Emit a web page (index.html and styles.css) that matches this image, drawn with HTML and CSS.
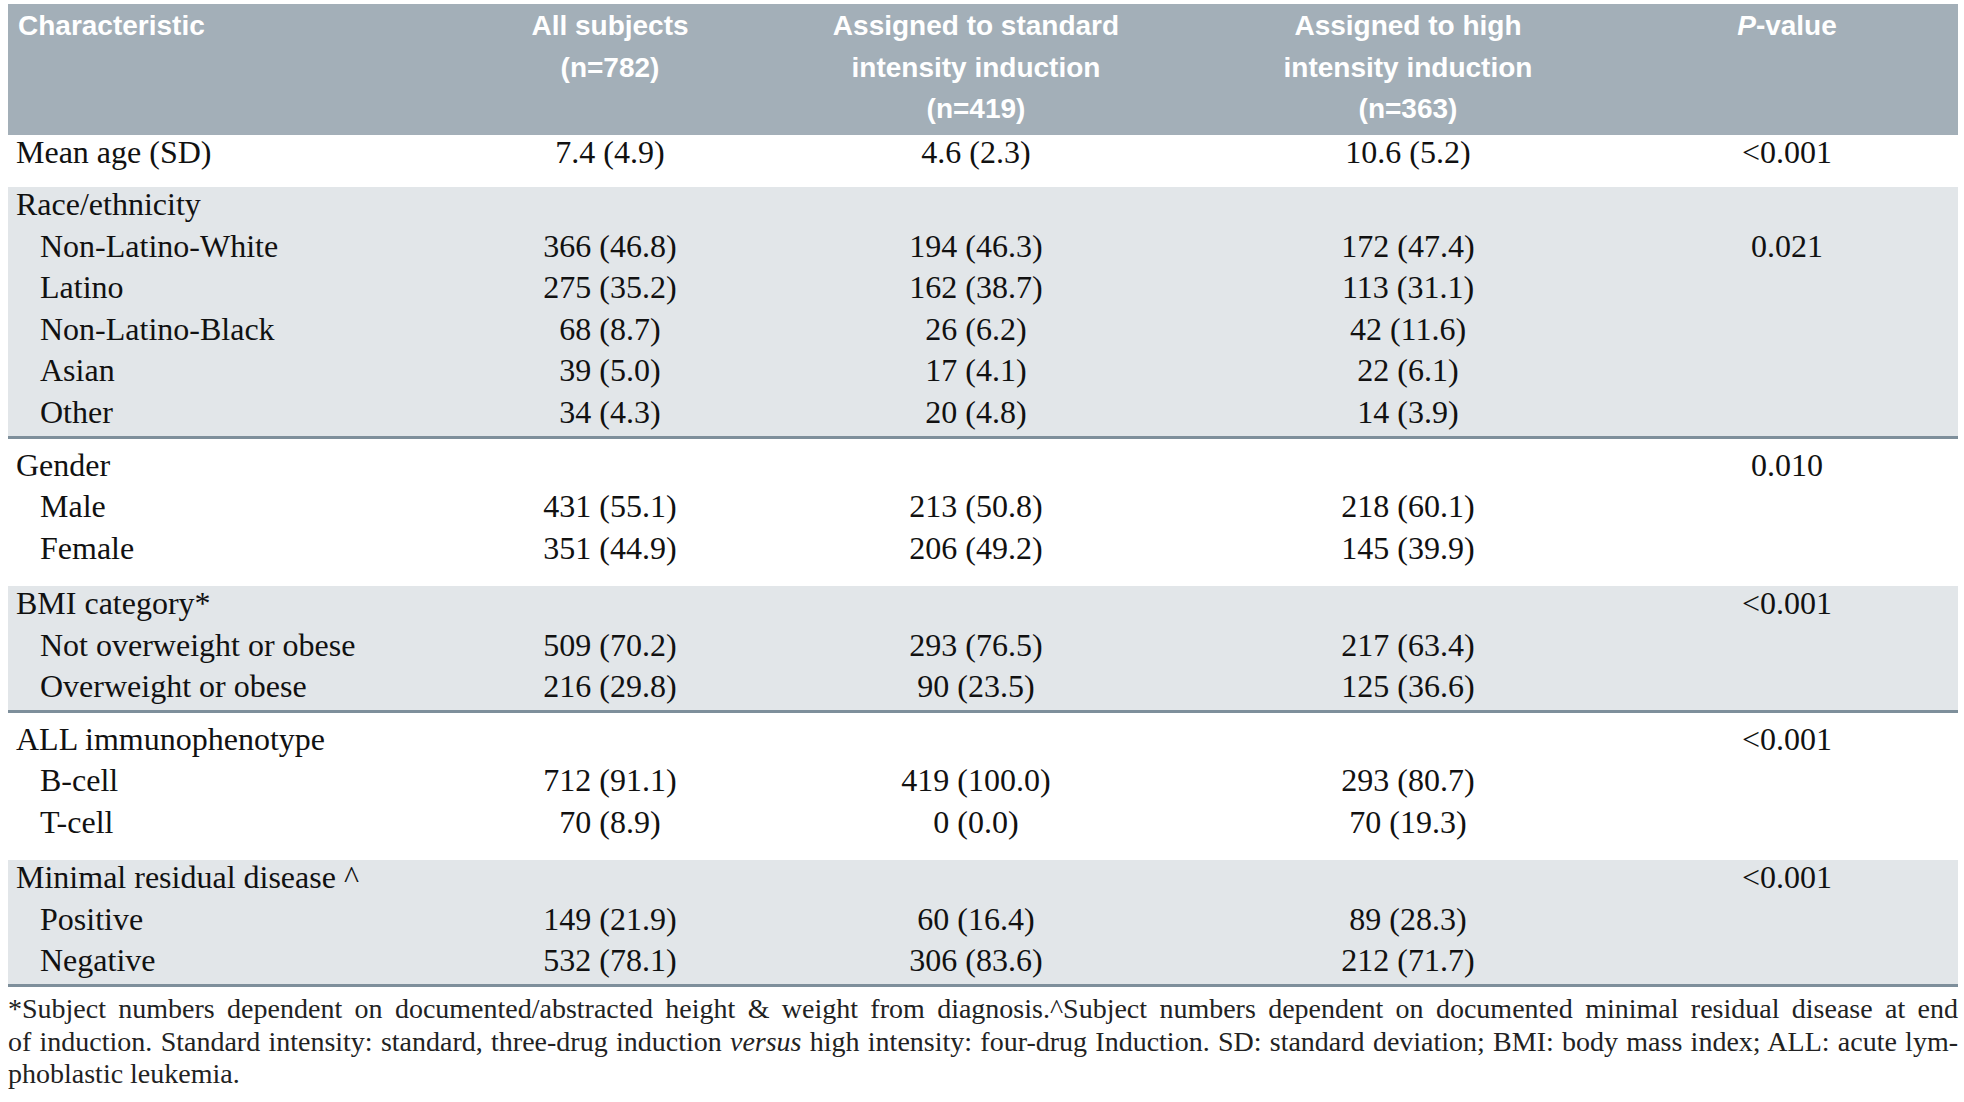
FILE: index.html
```html
<!DOCTYPE html>
<html lang="en">
<head>
<meta charset="utf-8">
<title>Table</title>
<link rel="stylesheet" href="styles.css">
</head>
<body>
<div class="page">
<table class="data">
  <colgroup>
    <col class="c1"><col class="c2"><col class="c3"><col class="c4"><col class="c5">
  </colgroup>
  <thead>
    <tr>
      <th class="left">Characteristic</th>
      <th>All subjects<br>(n=782)</th>
      <th>Assigned to standard<br>intensity induction<br>(n=419)</th>
      <th>Assigned to high<br>intensity induction<br>(n=363)</th>
      <th><i>P</i>-value</th>
    </tr>
  </thead>
  <tbody class="grp white top">
    <tr class="first last"><td class="lbl">Mean age (SD)</td><td>7.4 (4.9)</td><td>4.6 (2.3)</td><td>10.6 (5.2)</td><td>&lt;0.001</td></tr>
  </tbody>
  <tbody class="grp gray">
    <tr class="first"><td class="lbl">Race/ethnicity</td><td></td><td></td><td></td><td></td></tr>
    <tr><td class="sub">Non-Latino-White</td><td>366 (46.8)</td><td>194 (46.3)</td><td>172 (47.4)</td><td>0.021</td></tr>
    <tr><td class="sub">Latino</td><td>275 (35.2)</td><td>162 (38.7)</td><td>113 (31.1)</td><td></td></tr>
    <tr><td class="sub">Non-Latino-Black</td><td>68 (8.7)</td><td>26 (6.2)</td><td>42 (11.6)</td><td></td></tr>
    <tr><td class="sub">Asian</td><td>39 (5.0)</td><td>17 (4.1)</td><td>22 (6.1)</td><td></td></tr>
    <tr class="last"><td class="sub">Other</td><td>34 (4.3)</td><td>20 (4.8)</td><td>14 (3.9)</td><td></td></tr>
  </tbody>
  <tbody class="grp white">
    <tr class="first"><td class="lbl">Gender</td><td></td><td></td><td></td><td>0.010</td></tr>
    <tr><td class="sub">Male</td><td>431 (55.1)</td><td>213 (50.8)</td><td>218 (60.1)</td><td></td></tr>
    <tr class="last"><td class="sub">Female</td><td>351 (44.9)</td><td>206 (49.2)</td><td>145 (39.9)</td><td></td></tr>
  </tbody>
  <tbody class="grp gray">
    <tr class="first"><td class="lbl">BMI category*</td><td></td><td></td><td></td><td>&lt;0.001</td></tr>
    <tr><td class="sub">Not overweight or obese</td><td>509 (70.2)</td><td>293 (76.5)</td><td>217 (63.4)</td><td></td></tr>
    <tr class="last"><td class="sub">Overweight or obese</td><td>216 (29.8)</td><td>90 (23.5)</td><td>125 (36.6)</td><td></td></tr>
  </tbody>
  <tbody class="grp white">
    <tr class="first"><td class="lbl">ALL immunophenotype</td><td></td><td></td><td></td><td>&lt;0.001</td></tr>
    <tr><td class="sub">B-cell</td><td>712 (91.1)</td><td>419 (100.0)</td><td>293 (80.7)</td><td></td></tr>
    <tr class="last"><td class="sub">T-cell</td><td>70 (8.9)</td><td>0 (0.0)</td><td>70 (19.3)</td><td></td></tr>
  </tbody>
  <tbody class="grp gray">
    <tr class="first"><td class="lbl">Minimal residual disease ^</td><td></td><td></td><td></td><td>&lt;0.001</td></tr>
    <tr><td class="sub">Positive</td><td>149 (21.9)</td><td>60 (16.4)</td><td>89 (28.3)</td><td></td></tr>
    <tr class="last"><td class="sub">Negative</td><td>532 (78.1)</td><td>306 (83.6)</td><td>212 (71.7)</td><td></td></tr>
  </tbody>
</table>
<div class="notes">
  <p class="line">*Subject numbers dependent on documented/abstracted height &amp; weight from diagnosis.^Subject numbers dependent on documented minimal residual disease at end</p>
  <p class="line">of induction. Standard intensity: standard, three-drug induction <i>versus</i> high intensity: four-drug Induction. SD: standard deviation; BMI: body mass index; ALL: acute lym-</p>
  <p class="line final">phoblastic leukemia.</p>
</div>
</div>
</body>
</html>
```
FILE: styles.css
```css
html, body {
  margin: 0;
  padding: 0;
  background: #ffffff;
}
.page {
  padding: 4px 0 0 8px;
  width: 1950px;
}
.data {
  width: 1950px;
  border-collapse: collapse;
  table-layout: fixed;
  font-family: "Liberation Serif", "Times New Roman", serif;
  font-size: 32px;
  color: #111111;
}
.c1 { width: 460px; }
.c2 { width: 284px; }
.c3 { width: 448px; }
.c4 { width: 416px; }
.c5 { width: 342px; }

.data thead th {
  background: #a3afb8;
  color: #ffffff;
  font-family: "Liberation Sans", Arial, sans-serif;
  font-weight: bold;
  font-size: 28px;
  line-height: 41.5px;
  text-align: center;
  vertical-align: top;
  padding: 1px 0 5px 0;
}
.data thead th.left {
  text-align: left;
  padding-left: 10px;
}
.data td {
  padding: 0 0 7.5px 0;
  line-height: 34.1px;
  text-align: center;
  vertical-align: top;
  white-space: nowrap;
}
.data td.lbl {
  text-align: left;
  padding-left: 8px;
}
.data td.sub {
  text-align: left;
  padding-left: 32px;
}
.grp.gray {
  background: #e2e6e9;
  border-bottom: 3px solid #7e8f9b;
}
.grp.gray tr.last td { padding-bottom: 6.5px; }
.grp.white {
  background: #ffffff;
}
.grp.white tr.first td { padding-top: 9px; }
.grp.white tr.last td { padding-bottom: 21px; }
.grp.white.top tr.first td { padding-top: 0; }
.grp.white.top tr.last td { padding-bottom: 18.5px; }

.notes {
  margin-top: 6.5px;
  font-family: "Liberation Serif", "Times New Roman", serif;
  font-size: 28px;
  line-height: 32.6px;
  color: #222222;
}
.notes .line {
  margin: 0;
  white-space: nowrap;
  text-align: justify;
  text-align-last: justify;
}
.notes .line.final {
  text-align-last: left;
}
```
